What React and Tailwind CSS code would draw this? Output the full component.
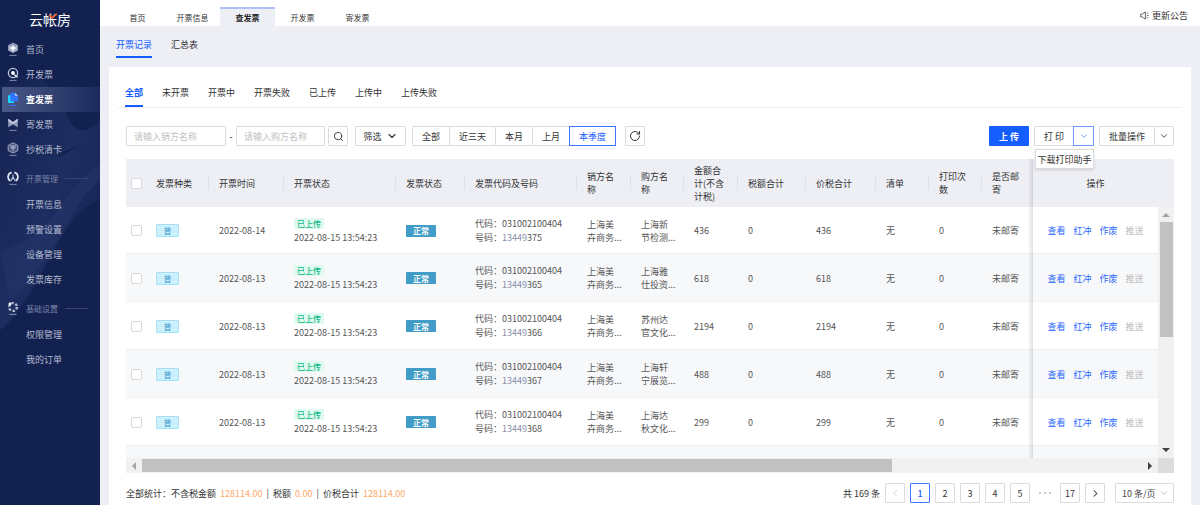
import React from "react";
import { Search, ChevronDown, ChevronLeft, ChevronRight, RotateCw } from "lucide-react";

const ICONS = {
  home: (
    <>
      <path d="M6 0.8 L10.8 3.2 V8.4 L6 11 L1.2 8.4 V3.2 Z" fill="#a9b3cb" />
      <path d="M6 0.8 L10.8 3.2 L6 5.6 L1.2 3.2 Z" fill="#8d99b8" />
      <path d="M6 3.6 V8.4 M3.6 6 H8.4" stroke="#fff" strokeWidth="1.8" />
    </>
  ),
  issue: (
    <>
      <circle cx="6" cy="6" r="4.6" fill="none" stroke="#b9c2d8" strokeWidth="1.3" />
      <circle cx="6" cy="6" r="1.9" fill="#fff" />
      <path d="M7.5 7.8 L10.6 10.2" stroke="#fff" strokeWidth="1.4" />
    </>
  ),
  query: (
    <>
      <path d="M1 3.2 H7 V11 H2 Q1 11 1 10 Z" fill="#16d8ff" />
      <path d="M3.4 0.8 H8 L11 3.8 V9.2 H3.4 Z" fill="#2f74ff" />
      <path d="M8 0.8 L11 3.8 H8 Z" fill="#b8d6ff" />
    </>
  ),
  mail: (
    <>
      <path d="M1.2 1.8 L6 5 L10.8 1.8 V10.2 L6 7.4 L1.2 10.2 Z" fill="#929dbb" />
      <path d="M1.2 1.8 L6 5 L10.8 1.8 V4 L6 7 L1.2 4 Z" fill="#c3cadd" />
    </>
  ),
  card: (
    <>
      <path d="M6 0.9 L10.8 3.4 V8.6 L6 11.1 L1.2 8.6 V3.4 Z" fill="#46547f" stroke="#aab4cd" strokeWidth="0.9" />
      <path d="M3 4 H9 M3.4 6 H8.6 M6 4 V9.4" stroke="#c5cce0" strokeWidth="0.9" />
    </>
  ),
  manage: (
    <>
      <path d="M4.6 1.4 A4.7 4.7 0 0 0 3.4 10 M7.4 1.4 A4.7 4.7 0 0 1 8.6 10" fill="none" stroke="#e3e7f2" strokeWidth="1.7" />
      <path d="M6 3.4 V6.6 M6 6 L4 9.6 M6 6 L8 9.6" stroke="#b9c2d8" strokeWidth="1.2" />
    </>
  ),
  base: (
    <>
      <circle cx="6" cy="6" r="3.9" fill="none" stroke="#b4bdd3" strokeWidth="2.4" strokeDasharray="2.4 1.68" />
      <circle cx="3" cy="3" r="1.4" fill="#fff" />
    </>
  ),
};

function SideIcon({ name, active }) {
  return (
    <svg viewBox="0 0 12 15" className="h-[15px] w-3 shrink-0" aria-hidden="true">
      {ICONS[name]}
      <path d="M2.4 13.4 H9.6" stroke={active ? "#2f74ff" : "#7f8bad"} strokeWidth="1" />
    </svg>
  );
}

function SideItem({ icon, label, active }) {
  return (
    <a
      href="#"
      className={
        active
          ? "ml-[2px] flex h-[25px] items-center gap-[7px] bg-linear-to-r from-[#4b5987] to-[#1c2b5c] pl-[5px] font-bold text-white"
          : "flex h-[25px] items-center gap-[7px] pl-[7px] text-[#b3bbd0]"
      }
    >
      {icon ? <SideIcon name={icon} active={active} /> : <span className="w-3" />}
      {label}
    </a>
  );
}

function SideGroup({ icon, label }) {
  return (
    <div className="mt-[2px] flex h-7 items-center gap-[7px] pl-[7px] pr-3 text-[8px] text-[#7a86a8]">
      <SideIcon name={icon} />
      {label}
      <span className="h-px flex-1 bg-[#38466f]" />
    </div>
  );
}

function Sidebar() {
  return (
    <aside className="relative w-[100px] shrink-0 overflow-hidden bg-[#132150]">
      <svg viewBox="0 0 100 505" className="absolute inset-0 h-full w-full" preserveAspectRatio="none" aria-hidden="true">
        <defs>
          <linearGradient id="wave" x1="0" y1="0" x2="1" y2="1">
            <stop offset="0" stopColor="#24356a" stopOpacity="0.1" />
            <stop offset="0.5" stopColor="#24356a" stopOpacity="0.6" />
            <stop offset="1" stopColor="#24356a" stopOpacity="0" />
          </linearGradient>
        </defs>
        <path d="M0 88 C30 60 55 85 65 110 C72 135 88 135 100 120 V200 C60 210 40 300 0 330 Z" fill="url(#wave)" />
        <path d="M0 250 C55 240 60 190 100 165 V180 C65 210 65 250 10 300 Z" fill="url(#wave)" />
        <path d="M55 158 L85 143 L62 153 Z" fill="#0e1a44" />
      </svg>
      <div className="relative">
        <div className="flex h-[37px] items-center justify-center pt-px">
          <a href="#" className="relative text-[14px] leading-none text-white">
            云帐房
            <svg viewBox="0 0 10 6" className="absolute top-[1px] left-[19px] h-[6px] w-[10px]" aria-hidden="true">
              <path d="M1 2 L4 4.6 L9 0.8" fill="none" stroke="#f0562b" strokeWidth="1.6" />
            </svg>
          </a>
        </div>
        <nav>
          <SideItem icon="home" label="首页" />
          <SideItem icon="issue" label="开发票" />
          <SideItem icon="query" label="查发票" active />
          <SideItem icon="mail" label="寄发票" />
          <SideItem icon="card" label="抄税清卡" />
          <SideGroup icon="manage" label="开票管理" />
          <SideItem label="开票信息" />
          <SideItem label="预警设置" />
          <SideItem label="设备管理" />
          <SideItem label="发票库存" />
          <SideGroup icon="base" label="基础设置" />
          <SideItem label="权限管理" />
          <SideItem label="我的订单" />
        </nav>
      </div>
    </aside>
  );
}

function TopBar() {
  const tabs = ["首页", "开票信息", "查发票", "开发票", "寄发票"];
  return (
    <header className="flex h-[26px] items-end justify-between bg-white pr-3 pl-[10px]">
      <nav className="flex text-[8px]">
        {tabs.map((t) => (
          <a
            key={t}
            href="#"
            className={
              t === "查发票"
                ? "flex h-[19px] w-[55px] items-center justify-center border-t-2 border-t-[#adc2f7] bg-[#eeeff5] font-bold text-[#222]"
                : "flex h-[19px] w-[55px] items-center justify-center border-t-2 border-t-transparent text-[#333]"
            }
          >
            {t}
          </a>
        ))}
      </nav>
      <button className="flex h-[21px] items-center gap-[3px] text-[#333]">
        <svg viewBox="0 0 10 10" className="h-[9px] w-[9px]" fill="none" stroke="#444" strokeWidth="0.9" aria-hidden="true">
          <path d="M0.8 3.4 H2.6 L6 1 V9 L2.6 6.6 H0.8 Z M7.8 5 H9.6 M7.6 2.8 L9 2 M7.6 7.2 L9 8" />
        </svg>
        更新公告
      </button>
    </header>
  );
}

const BTN = "flex h-5 items-center justify-center rounded-[1px] border border-[#dcdcdc] bg-white text-[#333]";

function Filters() {
  const ranges = [
    ["全部", "w-[38px]"],
    ["近三天", "w-[47px]"],
    ["本月", "w-[38px]"],
    ["上月", "w-[38px]"],
  ];
  return (
    <div className="flex items-center justify-between">
      <div className="flex items-center">
        <input
          aria-label="销方名称"
          placeholder="请输入销方名称"
          className="h-5 w-[100px] rounded-[1px] border border-[#dcdcdc] px-[7px] outline-none placeholder:text-[#bfbfbf]"
        />
        <span className="w-[10px] text-center">-</span>
        <input
          aria-label="购方名称"
          placeholder="请输入购方名称"
          className="h-5 w-[89px] rounded-[1px] border border-[#dcdcdc] px-[7px] outline-none placeholder:text-[#bfbfbf]"
        />
        <button aria-label="搜索" className={BTN + " ml-[3px] w-5"}>
          <Search size={11} strokeWidth={2} />
        </button>
        <button className={BTN + " ml-[7px] w-[51px] gap-[4px]"}>
          筛选
          <ChevronDown size={12} strokeWidth={2.2} />
        </button>
        <div className="ml-[6px] flex">
          {ranges.map(([label, w]) => (
            <button key={label} className={BTN + " -mr-px " + w}>
              {label}
            </button>
          ))}
          <button className="relative flex h-5 w-[47px] items-center justify-center border border-[#3f78ff] bg-white text-[#1a5cff]">
            本季度
          </button>
        </div>
        <button aria-label="刷新" className={BTN + " ml-[9px] w-5"}>
          <RotateCw size={12} strokeWidth={2} />
        </button>
      </div>
      <div className="flex gap-[5px]">
        <button className="h-5 w-10 rounded-[1px] bg-[#165dff] font-bold text-white">上 传</button>
        <div className="relative flex">
          <button className={BTN + " w-10"}>打 印</button>
          <button
            aria-label="更多打印操作"
            className="-ml-px flex h-5 w-[21px] items-center justify-center border border-[#6f9bff] bg-white text-[#5f8fff]"
          >
            <ChevronDown size={10} strokeWidth={2} />
          </button>
          <button className="absolute top-[23px] right-0 z-10 h-5 w-[59px] border border-[#dcdcdc] bg-white whitespace-nowrap text-[#333] shadow-sm">
            下载打印助手
          </button>
        </div>
        <div className="flex">
          <button className={BTN + " w-14"}>批量操作</button>
          <button aria-label="更多批量操作" className={BTN + " -ml-px w-5"}>
            <ChevronDown size={10} strokeWidth={2} />
          </button>
        </div>
      </div>
    </div>
  );
}

const COLUMNS = [
  ["发票种类", "w-[63px]"],
  ["开票时间", "w-[75px]"],
  ["开票状态", "w-[112px]"],
  ["发票状态", "w-[69px]"],
  ["发票代码及号码", "w-[112px]"],
  ["销方名称", "w-[54px]"],
  ["购方名称", "w-[53px]"],
  ["金额合计(不含计税)", "w-[54px]"],
  ["税额合计", "w-[68px]"],
  ["价税合计", "w-[70px]"],
  ["清单", "w-[53px]"],
  ["打印次数", "w-[53px]"],
  ["是否邮寄", "w-[51px]"],
];

const ROWS = [
  { date: "2022-08-14", tail: "375", buyer: ["上海新", "节检测..."], amount: "436" },
  { date: "2022-08-13", tail: "365", buyer: ["上海雅", "仕投资..."], amount: "618" },
  { date: "2022-08-13", tail: "366", buyer: ["苏州达", "官文化..."], amount: "2194" },
  { date: "2022-08-13", tail: "367", buyer: ["上海轩", "宁展览..."], amount: "488" },
  { date: "2022-08-13", tail: "368", buyer: ["上海达", "秋文化..."], amount: "299" },
];

const CHECK = "block h-[11px] w-[11px] appearance-none rounded-[2px] border border-[#d9d9d9] bg-white";
const EDGE = "bg-[linear-gradient(to_left,#0000001f,transparent_5px)]";

function InvoiceTable() {
  return (
    <div>
      <div className="flex">
        <div className="min-w-0 flex-1">
          <table className="w-full table-fixed border-collapse text-left">
            <thead>
              <tr className="h-12 bg-[#eeeff5] text-[#333]">
                <th className="w-5 pl-[5px]">
                  <input type="checkbox" aria-label="全选" className={CHECK} />
                </th>
                {COLUMNS.map(([label, w], i) => (
                  <th key={label} className={w + " p-0 font-normal " + (i === 12 ? EDGE : "")}>
                    <div className="flex h-[42px] items-center justify-between">
                      <span className="ml-[10px] max-w-[84px] flex-1 pr-[10px] leading-[13px]">{label}</span>
                      {i < 12 && <span className="h-[14px] w-px bg-[#e0e1e8]" />}
                    </div>
                  </th>
                ))}
                <th className="text-center font-normal">操作</th>
              </tr>
            </thead>
            <tbody>
              {ROWS.map((r, i) => (
                <tr
                  key={r.tail}
                  className={"h-12 text-[#555] shadow-[inset_0_-1px_0_#f0f1f3] first:h-[47px] " + (i % 2 ? "bg-[#f7f8fa]" : "bg-white")}
                >
                  <td className="pl-[5px]">
                    <input type="checkbox" aria-label={"选择 13449" + r.tail} className={CHECK} />
                  </td>
                  <td className="pl-[10px]">
                    <span className="flex h-[13px] w-[23px] items-center justify-center rounded-[1px] border border-[#a8e0f7] bg-[#cdf0ff] text-[8px] text-[#3a9cc8]">
                      普
                    </span>
                  </td>
                  <td className="pl-[10px]">{r.date}</td>
                  <td className="pl-[10px]">
                    <span className="flex h-[11px] w-[30px] items-center justify-center rounded-[1px] bg-[#dffaee] text-[8px] font-medium text-[#12b886]">
                      已上传
                    </span>
                    <span className="mt-[2px] block leading-[13px] whitespace-nowrap">2022-08-15 13:54:23</span>
                  </td>
                  <td className="pl-[10px]">
                    <span className="flex h-3 w-[30px] items-center justify-center rounded-[1px] bg-[#419cc8] text-[8px] font-bold text-white">
                      正常
                    </span>
                  </td>
                  <td className="pl-[10px] leading-[14px] whitespace-nowrap">
                    代码：031002100404
                    <br />
                    号码：<span className="text-[#8790a8]">13449</span>
                    {r.tail}
                  </td>
                  <td className="pl-[10px] leading-[13px] whitespace-nowrap">
                    上海美
                    <br />
                    卉商务...
                  </td>
                  <td className="pl-[10px] leading-[13px] whitespace-nowrap">
                    {r.buyer[0]}
                    <br />
                    {r.buyer[1]}
                  </td>
                  <td className="pl-[10px]">{r.amount}</td>
                  <td className="pl-[10px]">0</td>
                  <td className="pl-[10px]">{r.amount}</td>
                  <td className="pl-[10px]">无</td>
                  <td className="pl-[10px]">0</td>
                  <td className={"pl-[10px] " + EDGE}>未邮寄</td>
                  <td>
                    <div className="flex justify-center gap-2 text-[#2b68ff]">
                      <a href="#">查看</a>
                      <a href="#">红冲</a>
                      <a href="#">作废</a>
                      <span className="text-[#bfbfbf]">推送</span>
                    </div>
                  </td>
                </tr>
              ))}
              <tr className="h-3 bg-[#f7f8fa]">
                <td colSpan={14} className={EDGE} />
                <td />
              </tr>
            </tbody>
          </table>
        </div>
        <div className="flex w-4 shrink-0 flex-col">
          <div className="h-12 bg-[#eeeff5]" />
          <div className="flex flex-1 flex-col items-center bg-[#f1f1f1]">
            <div className="flex h-[15px] items-center">
              <svg viewBox="0 0 8 4" className="h-1 w-2" aria-hidden="true">
                <path d="M0 4 L4 0 L8 4 Z" fill="#a3a3a3" />
              </svg>
            </div>
            <div className="h-[115px] w-[13px] bg-[#c1c1c1]" />
            <div className="mt-auto flex h-[17px] items-center">
              <svg viewBox="0 0 8 4" className="h-1 w-2" aria-hidden="true">
                <path d="M0 0 L4 4 L8 0 Z" fill="#404040" />
              </svg>
            </div>
          </div>
        </div>
      </div>
      <div className="flex h-[15px]">
        <div className="flex flex-1 items-center bg-[#f1f1f1]">
          <div className="flex w-4 justify-center">
            <svg viewBox="0 0 4 8" className="h-2 w-1" aria-hidden="true">
              <path d="M4 0 L0 4 L4 8 Z" fill="#a3a3a3" />
            </svg>
          </div>
          <div className="flex-1">
            <div className="h-[13px] w-3/4 bg-[#c1c1c1]" />
          </div>
          <div className="flex w-4 justify-center">
            <svg viewBox="0 0 4 8" className="h-2 w-1" aria-hidden="true">
              <path d="M0 0 L4 4 L0 8 Z" fill="#404040" />
            </svg>
          </div>
        </div>
        <div className="w-4 bg-[#dcdcdc]" />
      </div>
    </div>
  );
}

function Footer() {
  return (
    <div className="mt-[10px] flex items-center justify-between">
      <p className="flex items-center gap-[4px] text-[#333]">
        <span>全部统计：不含税金额</span>
        <span className="text-[#ffa866]">128114.00</span>
        <span>|</span>
        <span>税额</span>
        <span className="text-[#ffa866]">0.00</span>
        <span>|</span>
        <span>价税合计</span>
        <span className="text-[#ffa866]">128114.00</span>
      </p>
      <div className="flex items-center gap-[5px]">
        <span className="text-[#333]">共 169 条</span>
        <button aria-label="上一页" className={BTN + " w-5"}>
          <ChevronLeft size={10} color="#c4c4c4" />
        </button>
        <button className="h-5 w-5 rounded-[1px] border border-[#3f78ff] bg-white font-medium text-[#1a5cff]">1</button>
        {["2", "3", "4", "5"].map((n) => (
          <button key={n} className={BTN + " w-5"}>
            {n}
          </button>
        ))}
        <span className="flex w-5 items-center justify-center gap-[3px]" aria-label="更多页">
          <span className="h-[2px] w-[2px] rounded-full bg-[#b8b8b8]" />
          <span className="h-[2px] w-[2px] rounded-full bg-[#b8b8b8]" />
          <span className="h-[2px] w-[2px] rounded-full bg-[#b8b8b8]" />
        </span>
        <button className={BTN + " w-5"}>17</button>
        <button aria-label="下一页" className={BTN + " w-5"}>
          <ChevronRight size={11} strokeWidth={2.2} />
        </button>
        <div className="relative ml-[5px]">
          <select aria-label="每页条数" className="block h-5 w-[59px] appearance-none rounded-[1px] border border-[#dcdcdc] bg-white pl-[6px] text-[#444]">
            <option>10 条/页</option>
          </select>
          <ChevronDown size={10} color="#b8b8b8" className="pointer-events-none absolute top-[5px] right-[5px]" />
        </div>
      </div>
    </div>
  );
}

export default function App() {
  return (
    <div className="flex min-h-screen bg-[#eeeff5] font-['Noto_Sans_CJK_SC',sans-serif] text-[9px] leading-[13px]">
      <Sidebar />
      <div className="flex min-w-0 flex-1 flex-col">
        <TopBar />
        <nav className="flex h-[41px] gap-[19px] pt-[6px] pl-4">
          <a href="#" className="flex h-[26px] items-center border-b-2 border-b-[#165dff] text-[#165dff]">
            开票记录
          </a>
          <a href="#" className="flex h-[26px] items-center border-b-2 border-b-transparent text-[#333]">
            汇总表
          </a>
        </nav>
        <main className="mr-[9px] ml-[9px] flex-1 bg-white px-[9px]">
          <nav className="flex h-[41px] items-end gap-[19px] border-b border-b-[#f0f0f0] pl-[7px]">
            {["全部", "未开票", "开票中", "开票失败", "已上传", "上传中", "上传失败"].map((t) => (
              <a
                key={t}
                href="#"
                className={
                  t === "全部"
                    ? "flex h-7 items-center border-b-2 border-b-[#165dff] font-bold text-[#165dff]"
                    : "flex h-7 items-center border-b-2 border-b-transparent text-[#333]"
                }
              >
                {t}
              </a>
            ))}
          </nav>
          <div className="pt-[18px] pr-2 pl-2">
            <Filters />
            <div className="h-[13px]" />
            <InvoiceTable />
            <Footer />
          </div>
        </main>
      </div>
    </div>
  );
}
